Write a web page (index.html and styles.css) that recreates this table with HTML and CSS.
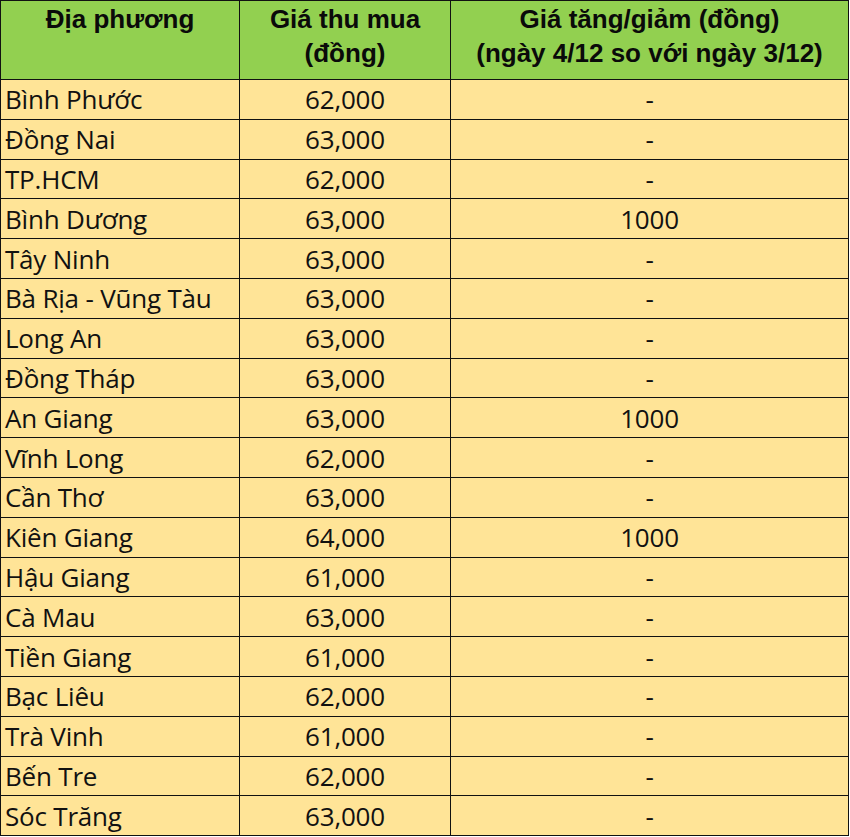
FILE: index.html
```html
<!DOCTYPE html>
<html lang="vi">
<head>
<meta charset="utf-8">
<link rel="stylesheet" href="styles.css">
</head>
<body>
<table class="price-table">
  <colgroup>
    <col class="c1"><col class="c2"><col class="c3">
  </colgroup>
  <thead>
    <tr>
      <th>Địa phương</th>
      <th>Giá thu mua<br>(đồng)</th>
      <th>Giá tăng/giảm (đồng)<br>(ngày 4/12 so với ngày 3/12)</th>
    </tr>
  </thead>
  <tbody>
    <tr><td class="name">Bình Phước</td><td>62,000</td><td>-</td></tr>
    <tr><td class="name">Đồng Nai</td><td>63,000</td><td>-</td></tr>
    <tr><td class="name">TP.HCM</td><td>62,000</td><td>-</td></tr>
    <tr><td class="name">Bình Dương</td><td>63,000</td><td>1000</td></tr>
    <tr><td class="name">Tây Ninh</td><td>63,000</td><td>-</td></tr>
    <tr><td class="name">Bà Rịa - Vũng Tàu</td><td>63,000</td><td>-</td></tr>
    <tr><td class="name">Long An</td><td>63,000</td><td>-</td></tr>
    <tr><td class="name">Đồng Tháp</td><td>63,000</td><td>-</td></tr>
    <tr><td class="name">An Giang</td><td>63,000</td><td>1000</td></tr>
    <tr><td class="name">Vĩnh Long</td><td>62,000</td><td>-</td></tr>
    <tr><td class="name">Cần Thơ</td><td>63,000</td><td>-</td></tr>
    <tr><td class="name">Kiên Giang</td><td>64,000</td><td>1000</td></tr>
    <tr><td class="name">Hậu Giang</td><td>61,000</td><td>-</td></tr>
    <tr><td class="name">Cà Mau</td><td>63,000</td><td>-</td></tr>
    <tr><td class="name">Tiền Giang</td><td>61,000</td><td>-</td></tr>
    <tr><td class="name">Bạc Liêu</td><td>62,000</td><td>-</td></tr>
    <tr><td class="name">Trà Vinh</td><td>61,000</td><td>-</td></tr>
    <tr><td class="name">Bến Tre</td><td>62,000</td><td>-</td></tr>
    <tr><td class="name">Sóc Trăng</td><td>63,000</td><td>-</td></tr>
  </tbody>
</table>
</body>
</html>
```
FILE: styles.css
```css
html, body {
  margin: 0;
  padding: 0;
  background: #ffffff;
}
.price-table {
  border-collapse: collapse;
  table-layout: fixed;
  width: 848px;
  margin: 0;
}
.c1 { width: 239px; }
.c2 { width: 211px; }
.c3 { width: 398px; }
.price-table th,
.price-table td {
  border: 1.5px solid #111;
  padding: 0;
}
.price-table th {
  background: #92d050;
  color: #0a0a0a;
  font-family: "Liberation Sans", Arial, sans-serif;
  font-weight: bold;
  font-size: 26px;
  line-height: 34px;
  height: 79px;
  vertical-align: top;
  text-align: center;
  padding-top: 1px;
  box-sizing: border-box;
}
.price-table td {
  background: #ffe497;
  color: #111;
  font-family: "Open Sans", "Noto Sans", sans-serif;
  font-size: 26px;
  letter-spacing: -0.2px;
  height: 39.8px;
  box-sizing: border-box;
  text-align: center;
  vertical-align: middle;
  line-height: 1;
}
.price-table td.name {
  text-align: left;
  padding-left: 4px;
}
```
